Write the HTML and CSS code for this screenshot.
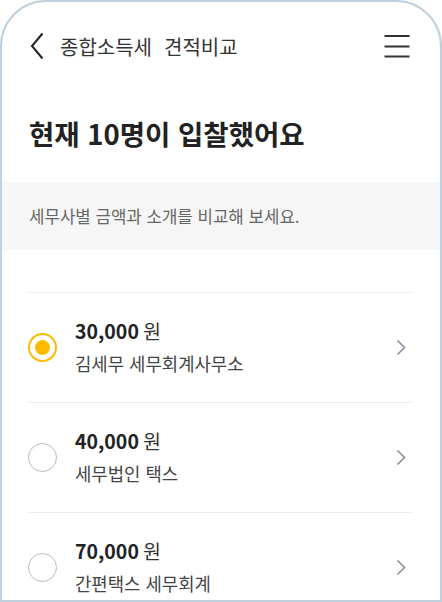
FILE: index.html
```html
<!DOCTYPE html>
<html lang="ko">
<head>
  <meta charset="UTF-8">
  <meta name="viewport" content="width=device-width, initial-scale=1.0">
  <title>견적비교</title>
  <link rel="stylesheet" href="styles.css">
</head>
<body>
  <div class="phone">
    <header class="top-bar">
      <button class="icon-button back-button" aria-label="뒤로">
        <svg width="14" height="28" viewBox="0 0 14 28"><path d="M12.5 1.5 L2 14 L12.5 26.5" fill="none" stroke="#222" stroke-width="2"/></svg>
      </button>
      <h1 class="top-title">종합소득세<span class="title-gap"></span>견적비교</h1>
      <button class="icon-button menu-button" aria-label="메뉴">
        <svg width="26" height="24" viewBox="0 0 26 24"><path d="M0.5 2 H25.5 M0.5 12.5 H25.5 M0.5 22.5 H25.5" fill="none" stroke="#333" stroke-width="1.8"/></svg>
      </button>
    </header>

    <h2 class="headline">현재 10명이 입찰했어요</h2>

    <div class="notice">세무사별 금액과 소개를 비교해 보세요.</div>

    <ul class="bid-list">
      <li class="bid-item selected">
        <span class="radio"></span>
        <div class="bid-info">
          <div class="bid-price"><strong>30,000</strong>원</div>
          <div class="bid-name">김세무 세무회계사무소</div>
        </div>
        <svg class="chevron" width="10" height="17" viewBox="0 0 10 17"><path d="M1.5 1.5 L8.5 8.5 L1.5 15.5" fill="none" stroke="#8a909b" stroke-width="1.6"/></svg>
      </li>
      <li class="bid-item">
        <span class="radio"></span>
        <div class="bid-info">
          <div class="bid-price"><strong>40,000</strong>원</div>
          <div class="bid-name">세무법인 택스</div>
        </div>
        <svg class="chevron" width="10" height="17" viewBox="0 0 10 17"><path d="M1.5 1.5 L8.5 8.5 L1.5 15.5" fill="none" stroke="#8a909b" stroke-width="1.6"/></svg>
      </li>
      <li class="bid-item">
        <span class="radio"></span>
        <div class="bid-info">
          <div class="bid-price"><strong>70,000</strong>원</div>
          <div class="bid-name">간편택스 세무회계</div>
        </div>
        <svg class="chevron" width="10" height="17" viewBox="0 0 10 17"><path d="M1.5 1.5 L8.5 8.5 L1.5 15.5" fill="none" stroke="#8a909b" stroke-width="1.6"/></svg>
      </li>
    </ul>
  </div>
</body>
</html>
```

FILE: styles.css
```css
* {
  margin: 0;
  padding: 0;
  box-sizing: border-box;
}

body {
  font-family: "Noto Sans CJK KR", "Noto Sans", sans-serif;
  background: #fff;
  color: #222;
  width: 442px;
  height: 602px;
  overflow: hidden;
}

.phone {
  width: 442px;
  height: 602px;
  border: 2px solid #bfd1de;
  border-radius: 46px 46px 0 0;
  overflow: hidden;
  background: #fff;
}

/* Top bar */
.top-bar {
  height: 88px;
  display: flex;
  align-items: center;
  padding: 0 30px 0 28px;
}

.icon-button {
  background: none;
  border: none;
  display: flex;
  align-items: center;
  cursor: pointer;
}

.back-button {
  margin-right: 16px;
}

.top-title {
  font-size: 20px;
  font-weight: 400;
  color: #333;
  flex: 1;
}

.title-gap {
  display: inline-block;
  width: 12px;
}

/* Headline */
.headline {
  margin-top: 25px;
  padding-left: 27px;
  font-size: 27.5px;
  font-weight: 700;
  line-height: 36px;
  color: #222;
}

.notice {
  margin-top: 31px;
  height: 68px;
  display: flex;
  align-items: center;
  padding-left: 27px;
  background: #f6f6f6;
  font-size: 16.8px;
  color: #666;
}

/* Bid list */
.bid-list {
  list-style: none;
  margin: 42px 28px 0 26px;
}

.bid-item {
  height: 110px;
  border-top: 1px solid #ededed;
  display: flex;
  align-items: center;
  cursor: pointer;
}

.radio {
  width: 29px;
  height: 29px;
  border-radius: 50%;
  border: 1.6px solid #b6bbc3;
  display: flex;
  align-items: center;
  justify-content: center;
  margin-right: 18px;
  flex-shrink: 0;
}

.bid-item.selected .radio {
  border: 2px solid #ffba00;
}

.bid-item.selected .radio::after {
  content: "";
  width: 15px;
  height: 15px;
  border-radius: 50%;
  background: #ffba00;
}

.bid-info {
  flex: 1;
  padding-bottom: 2px;
}

.bid-price {
  font-size: 19.5px;
  line-height: 26px;
  color: #333;
}

.bid-price strong {
  font-weight: 700;
  color: #222;
  margin-right: 4px;
}

.bid-name {
  margin-top: 7px;
  font-size: 17.8px;
  line-height: 24px;
  color: #444;
}

.chevron {
  margin-right: 6px;
}
```
